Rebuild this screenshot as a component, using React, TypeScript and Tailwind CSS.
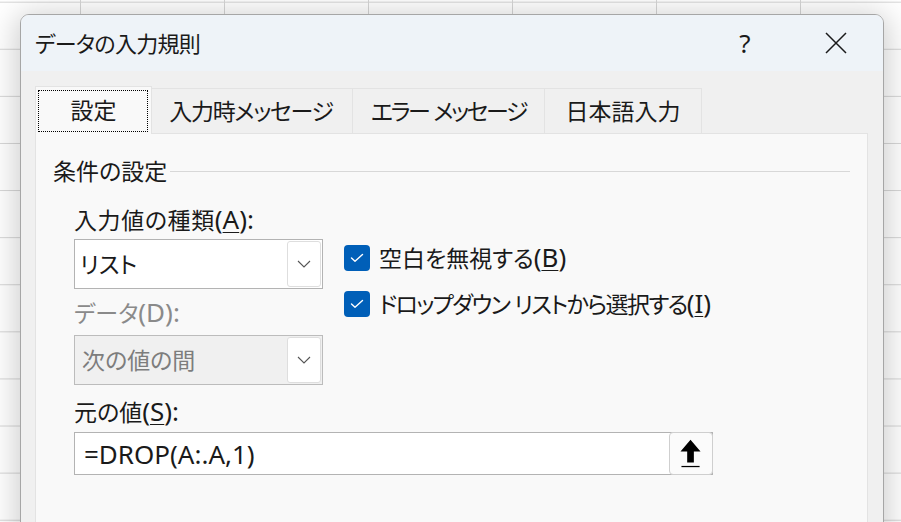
import React from "react";

function Lat({ children }: { children: React.ReactNode }) {
  return <span className="text-[26px] leading-[26px] tracking-normal">{children}</span>;
}

function U({ children }: { children: React.ReactNode }) {
  return <span className="underline decoration-1 underline-offset-[3px]">{children}</span>;
}

function Chevron() {
  return (
    <svg width="14" height="8" viewBox="0 0 14 8">
      <path d="M1 1 L7 7 L13 1" fill="none" stroke="#555555" strokeWidth="1.1" />
    </svg>
  );
}

function Combo({ text, disabled }: { text: string; disabled?: boolean }) {
  return (
    <div
      className={
        disabled
          ? "flex h-[50px] w-[249px] items-stretch border border-[#bcbcbc] bg-[#f0f0f0] p-[1px]"
          : "flex h-[50px] w-[249px] items-stretch border border-[#b3b3b3] bg-white p-[1px]"
      }
    >
      <div
        className={
          disabled
            ? "flex flex-1 items-center pl-[6px] text-[23px] text-[#7d7d7d]"
            : "flex flex-1 items-center pl-[4px] text-[23px] text-[#1a1a1a]"
        }
      >
        {text}
      </div>
      <div className="flex w-[34px] items-center justify-center rounded-[3px] border border-[#dedede] bg-white">
        <Chevron />
      </div>
    </div>
  );
}

function Check() {
  return (
    <div className="flex h-[26px] w-[26px] items-center justify-center rounded-[4px] bg-[#005fb8]">
      <svg width="14" height="10" viewBox="0 0 14 10">
        <path
          d="M1.5 5 L5 8.3 L12.5 1.5"
          fill="none"
          stroke="white"
          strokeWidth="1.4"
          strokeLinecap="round"
          strokeLinejoin="round"
        />
      </svg>
    </div>
  );
}

export default function App() {
  return (
    <div className="h-[522px] w-[901px] overflow-hidden bg-white [background-image:linear-gradient(to_right,#d6d6d6_1px,transparent_1px),linear-gradient(to_bottom,#d6d6d6_1px,transparent_1px)] [background-size:144px_47.1px] [background-position:80px_1.7px] pl-[20px] pt-[14px] font-['Noto_Sans','Noto_Sans_CJK_JP',sans-serif] text-[#1a1a1a] [font-feature-settings:'palt']">
      <div className="flex h-[540px] w-[864px] flex-col overflow-hidden rounded-t-[9px] border border-[#a6a6a6] bg-[#f0f0f0] shadow-[0_4px_30px_4px_rgba(0,0,0,0.2)]">
        {/* Title bar */}
        <div className="flex h-[56px] shrink-0 items-center bg-[#eef3f8] pl-[14px]">
          <div className="flex-1 text-[22px] leading-[30px] tracking-[-0.7px]">データの入力規則</div>
          <div className="flex w-[24px] justify-center text-[26px] leading-[30px]">?</div>
          <div className="ml-[68px] mr-[36px] flex h-[30px] w-[22px] items-center justify-center">
            <svg width="22" height="22" viewBox="0 0 22 22">
              <path d="M1 1 L21 21 M21 1 L1 21" stroke="#1a1a1a" strokeWidth="1.5" />
            </svg>
          </div>
        </div>

        {/* Body */}
        <div className="flex flex-1 flex-col pl-[14px] pr-[15px] pt-[15px]">
          {/* Tabs */}
          <div className="flex h-[47px] items-end text-[23px] leading-[30px]">
            <div className="relative z-10 -mb-px flex h-[48px] w-[117px] items-center justify-center border-l border-r border-t border-[#e3e3e3] bg-[#f9f9f9] pb-[2px]">
              <div className="absolute bottom-[2px] left-[2px] right-[3px] top-[3px] border border-dotted border-black" />
              設定
            </div>
            <div className="flex h-[45px] w-[201px] items-center justify-center border-r border-t border-[#e3e3e3] pr-[2px] tracking-[-1.3px]">
              入力時メッセージ
            </div>
            <div className="flex h-[45px] w-[192px] items-center justify-center border-r border-t border-[#e3e3e3] tracking-[-2.4px]">
              <span>エラー</span>
              <span className="ml-[5px]">メッセージ</span>
            </div>
            <div className="flex h-[45px] w-[157px] items-center justify-center border-r border-t border-[#e3e3e3]">
              日本語入力
            </div>
          </div>

          {/* Panel */}
          <div className="flex-1 border border-[#e3e3e3] bg-[#f9f9f9]">
            <div className="mt-[22px] flex items-center px-[17px]">
              <div className="text-[23px] leading-[30px]">条件の設定</div>
              <div className="ml-[3px] h-px flex-1 bg-[#d8d8d8]" />
            </div>

            <div className="mt-[19px] flex flex-col pl-[38px] text-[23px] leading-[30px]">
              <div className="flex">
                <div className="flex w-[249px] flex-col">
                  <div className="h-[30px] tracking-[0.6px]">
                    入力値の種類
                    <Lat>
                      (<U>A</U>):
                    </Lat>
                  </div>
                  <div className="mt-[4px]">
                    <Combo text="リスト" />
                  </div>
                  <div className="mt-[9px] h-[30px] text-[#8a8a8a]">
                    データ<Lat>(D):</Lat>
                  </div>
                  <div className="mt-[7px]">
                    <Combo text="次の値の間" disabled />
                  </div>
                </div>
                <div className="ml-[21px] flex flex-col gap-[20px] pt-[40px]">
                  <div className="flex h-[26px] items-center gap-[9px]">
                    <Check />
                    <div>
                      空白を無視する
                      <Lat>
                        (<U>B</U>)
                      </Lat>
                    </div>
                  </div>
                  <div className="flex h-[26px] items-center gap-[9px]">
                    <Check />
                    <div className="flex items-baseline">
                      <span className="tracking-[-1.7px]">ドロップダウン</span>
                      <span className="ml-[5px] tracking-[-1.6px]">リストから選択する</span>
                      <Lat>
                        (<U>I</U>)
                      </Lat>
                    </div>
                  </div>
                </div>
              </div>

              <div className="mt-[12px] h-[30px]">
                元の値
                <Lat>
                  (<U>S</U>):
                </Lat>
              </div>
              <div className="mt-[5px] flex h-[43px] w-[639px] items-stretch border border-[#b3b3b3] bg-white">
                <div className="flex flex-1 items-center pl-[9px] text-[26px]">=DROP(A:.A,1)</div>
                <div className="-my-px -mr-px flex w-[44px] items-center justify-center rounded-[4px] border border-[#cfcfcf] bg-[#fbfbfb]">
                  <svg width="44" height="43" viewBox="0 0 44 43">
                    <polygon points="21.5,7 32,19.5 25,19.5 25,31 18,31 18,19.5 11,19.5" fill="#000" />
                    <rect x="12" y="34.5" width="19" height="1.3" fill="#000" />
                  </svg>
                </div>
              </div>
            </div>
          </div>
        </div>
      </div>
    </div>
  );
}
